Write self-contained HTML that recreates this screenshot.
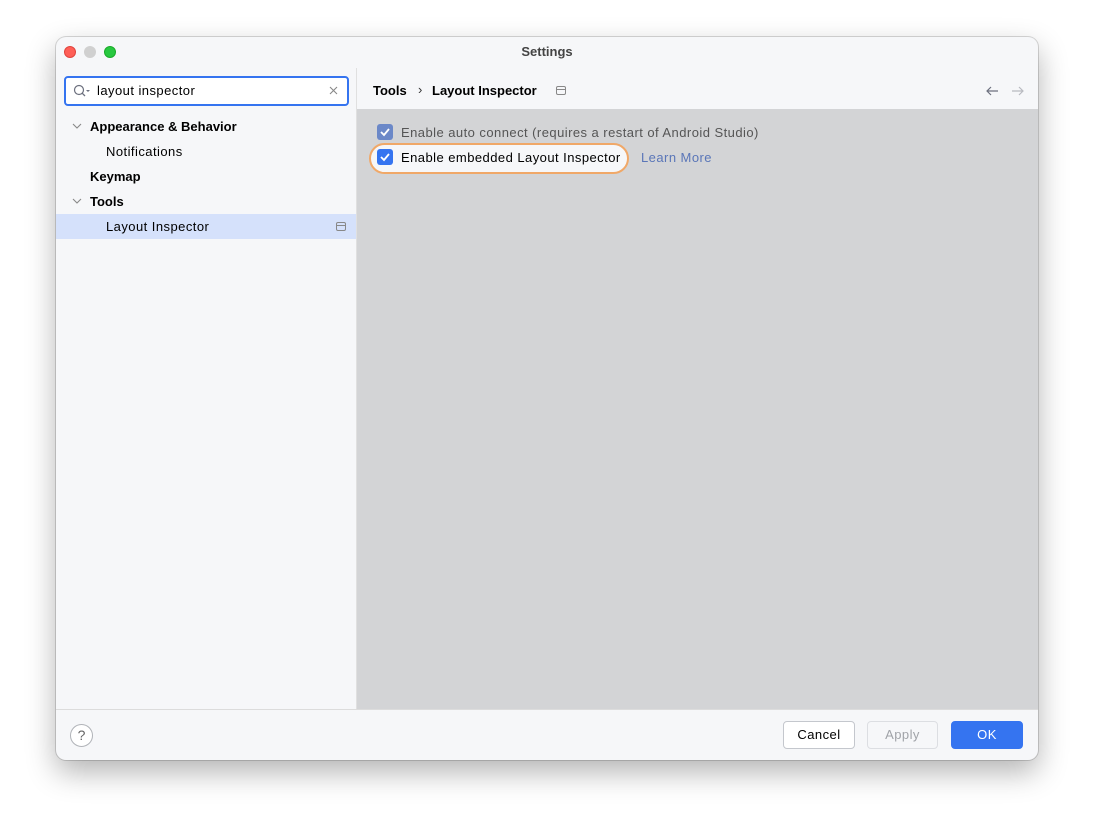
<!DOCTYPE html>
<html><head><style>
*{box-sizing:border-box;margin:0;padding:0}
body{width:1094px;height:834px;background:#fff;font-family:"Liberation Sans",sans-serif;font-size:13px;color:#000;position:relative;overflow:hidden;letter-spacing:.45px}
.win{position:absolute;left:56px;top:37px;width:982px;height:723px;background:#f6f7f9;border-radius:10px;box-shadow:0 12px 30px rgba(0,0,0,.3),0 0 0 1px rgba(0,0,0,.15);overflow:hidden}
.abs{position:absolute}
.dot{position:absolute;top:9px;width:12px;height:12px;border-radius:50%}
.title{position:absolute;top:7px;left:0;width:100%;text-align:center;font-weight:bold;color:#444;font-size:13px;letter-spacing:0}
.search{left:8px;top:39px;width:285px;height:30px;border:2px solid #3574f0;border-radius:4px;background:#fff}
.tree div{position:absolute;font-size:13px}
.b{font-weight:bold;letter-spacing:0}
.gray{left:301px;top:72px;width:681px;height:600px;background:#d3d4d6}
.sep{left:300px;top:31px;width:1px;height:641px;background:#e0e0e0}
.foot{left:0;top:672px;width:982px;height:1px;background:#dcdcdc}
.btn{position:absolute;top:684px;height:28px;border-radius:4px;text-align:center;line-height:26px;font-size:13px}
.cb{position:absolute;width:16px;height:16px;border-radius:3px}
</style></head><body>
<div class="win">
 <div class="dot" style="left:8px;background:#fe5f57;border:1px solid #e0443e"></div>
 <div class="dot" style="left:28px;background:#d0d0d0"></div>
 <div class="dot" style="left:48px;background:#28c840;border:1px solid #1aab29"></div>
 <div class="title">Settings</div>
 <div class="abs sep"></div>
 <div class="abs search">
  <svg class="abs" style="left:7px;top:6px" width="18" height="14"><circle cx="6" cy="6" r="4.5" fill="none" stroke="#6c707e" stroke-width="1.2"/><line x1="9.3" y1="9.3" x2="12" y2="12" stroke="#6c707e" stroke-width="1.3"/><path d="M13 6l2 2 2-2z" fill="#6c707e"/></svg>
  <div class="abs" style="left:31px;top:5px;font-size:13px">layout inspector</div>
  <svg class="abs" style="left:263px;top:8px" width="10" height="10"><path d="M1 1L8 8M8 1L1 8" stroke="#888" stroke-width="1.1"/></svg>
 </div>
 <div class="tree">
  <svg class="abs" style="left:16px;top:86px" width="10" height="6"><path d="M1 1l4 4 4-4" fill="none" stroke="#888" stroke-width="1.1"/></svg>
  <div class="b" style="left:34px;top:82px">Appearance &amp; Behavior</div>
  <div style="left:50px;top:107px">Notifications</div>
  <div class="b" style="left:34px;top:132px">Keymap</div>
  <svg class="abs" style="left:16px;top:161px" width="10" height="6"><path d="M1 1l4 4 4-4" fill="none" stroke="#888" stroke-width="1.1"/></svg>
  <div class="b" style="left:34px;top:157px">Tools</div>
  <div style="left:0;top:177px;width:300px;height:25px;background:#d5e1fb"></div>
  <div style="left:50px;top:182px">Layout Inspector</div>
  <svg class="abs" style="left:280px;top:185px" width="10" height="9"><rect x="0.5" y="0.5" width="9" height="8" rx="1.5" fill="none" stroke="#888"/><line x1="0.5" y1="3.5" x2="9.5" y2="3.5" stroke="#888"/></svg>
 </div>
 <div class="abs b" style="left:317px;top:46px">Tools</div>
 <div class="abs" style="left:362px;top:45px;color:#333">›</div>
 <div class="abs b" style="left:376px;top:46px">Layout Inspector</div>
 <svg class="abs" style="left:500px;top:49px" width="10" height="9"><rect x="0.5" y="0.5" width="9" height="8" rx="1.5" fill="none" stroke="#888"/><line x1="0.5" y1="3.5" x2="9.5" y2="3.5" stroke="#888"/></svg>
 <svg class="abs" style="left:929px;top:49px" width="14" height="10"><path d="M13 5H2M6 1L2 5l4 4" fill="none" stroke="#6c707e" stroke-width="1.2"/></svg>
 <svg class="abs" style="left:955px;top:49px" width="14" height="10"><path d="M1 5h11M8 1l4 4-4 4" fill="none" stroke="#b8bac0" stroke-width="1.2"/></svg>
 <div class="abs gray"></div>
 <div class="cb" style="left:321px;top:87px;background:#6b88c8"><svg width="16" height="16"><path d="M4 8l3 3 5-6" fill="none" stroke="#fff" stroke-width="1.8"/></svg></div>
 <div class="abs" style="left:345px;top:88px;color:#555">Enable auto connect (requires a restart of Android Studio)</div>
 <div class="abs" style="left:313px;top:106px;width:260px;height:31px;border:2px solid #f0a868;border-radius:16px;background:#f6f7f9"></div>
 <div class="cb" style="left:321px;top:112px;background:#3574f0"><svg width="16" height="16"><path d="M4 8l3 3 5-6" fill="none" stroke="#fff" stroke-width="1.8"/></svg></div>
 <div class="abs" style="left:345px;top:113px">Enable embedded Layout Inspector</div>
 <div class="abs" style="left:585px;top:113px;color:#5a76b8">Learn More</div>
 <div class="abs foot"></div>
 <div class="abs" style="left:14px;top:687px;width:23px;height:23px;border:1px solid #b0b3b8;border-radius:50%;background:#fff;text-align:center;line-height:21px;color:#666;font-size:14px;letter-spacing:0">?</div>
 <div class="btn" style="left:727px;width:72px;background:#fff;border:1px solid #c4c7cd">Cancel</div>
 <div class="btn" style="left:811px;width:71px;border:1px solid #dcdee2;color:#a0a3a8">Apply</div>
 <div class="btn" style="left:895px;width:72px;background:#3574f0;color:#fff;border:1px solid #3574f0">OK</div>
</div>
</body></html>
